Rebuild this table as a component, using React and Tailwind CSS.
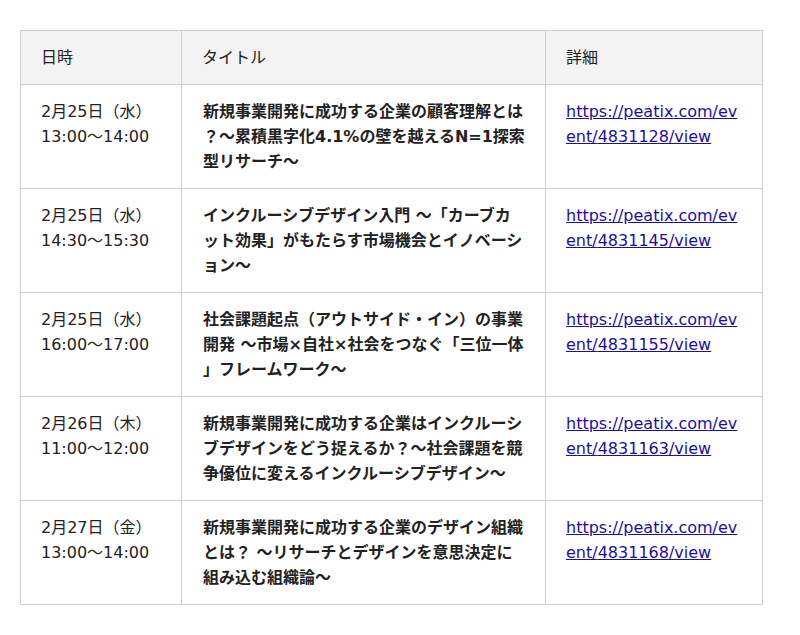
const events = [
  {
    date: "2月25日（水）",
    time: "13:00〜14:00",
    title: ["新規事業開発に成功する企業の顧客理解とは", "？〜累積黒字化4.1%の壁を越えるN=1探索", "型リサーチ〜"],
    id: "4831128",
  },
  {
    date: "2月25日（水）",
    time: "14:30〜15:30",
    title: ["インクルーシブデザイン入門 〜「カーブカ", "ット効果」がもたらす市場機会とイノベーシ", "ョン〜"],
    id: "4831145",
  },
  {
    date: "2月25日（水）",
    time: "16:00〜17:00",
    title: ["社会課題起点（アウトサイド・イン）の事業", "開発 〜市場×自社×社会をつなぐ「三位一体", "」フレームワーク〜"],
    id: "4831155",
  },
  {
    date: "2月26日（木）",
    time: "11:00〜12:00",
    title: ["新規事業開発に成功する企業はインクルーシ", "ブデザインをどう捉えるか？〜社会課題を競", "争優位に変えるインクルーシブデザイン〜"],
    id: "4831163",
  },
  {
    date: "2月27日（金）",
    time: "13:00〜14:00",
    title: ["新規事業開発に成功する企業のデザイン組織", "とは？ 〜リサーチとデザインを意思決定に", "組み込む組織論〜"],
    id: "4831168",
  },
];

export default function App() {
  return (
    <div className="min-h-[635px] bg-white pt-[30px] pl-5 font-['DejaVu_Sans','Noto_Sans_CJK_JP',sans-serif] text-base leading-[25px] text-[#222]">
      <table className="w-[742px] table-fixed border-collapse">
        <colgroup>
          <col className="w-[161px]" />
          <col className="w-[364px]" />
          <col className="w-[217px]" />
        </colgroup>
        <thead>
          <tr className="bg-[#f3f3f3]">
            <th className="border border-[#cfcfcf] px-5 py-[14px] text-left font-normal">日時</th>
            <th className="border border-[#cfcfcf] px-5 py-[14px] text-left font-normal">タイトル</th>
            <th className="border border-[#cfcfcf] px-5 py-[14px] text-left font-normal">詳細</th>
          </tr>
        </thead>
        <tbody>
          {events.map((ev) => (
            <tr key={ev.id} className="h-[104px]">
              <td className="border border-[#cfcfcf] px-5 pt-[14px] pb-[12px] align-top">
                <span className="block">{ev.date}</span>
                <span className="block">{ev.time}</span>
              </td>
              <td className="border border-[#cfcfcf] pt-[14px] pb-[12px] pl-[21px] pr-2 align-top font-bold">
                {ev.title.map((line, i) => (
                  <span key={i} className="block whitespace-nowrap">{line}</span>
                ))}
              </td>
              <td className="border border-[#cfcfcf] px-5 pt-[14px] pb-[12px] align-top">
                <a href="#" className="text-[#1a0dab] underline">
                  <span className="block">https://peatix.com/ev</span>
                  <span className="block">ent/{ev.id}/view</span>
                </a>
              </td>
            </tr>
          ))}
        </tbody>
      </table>
    </div>
  );
}
